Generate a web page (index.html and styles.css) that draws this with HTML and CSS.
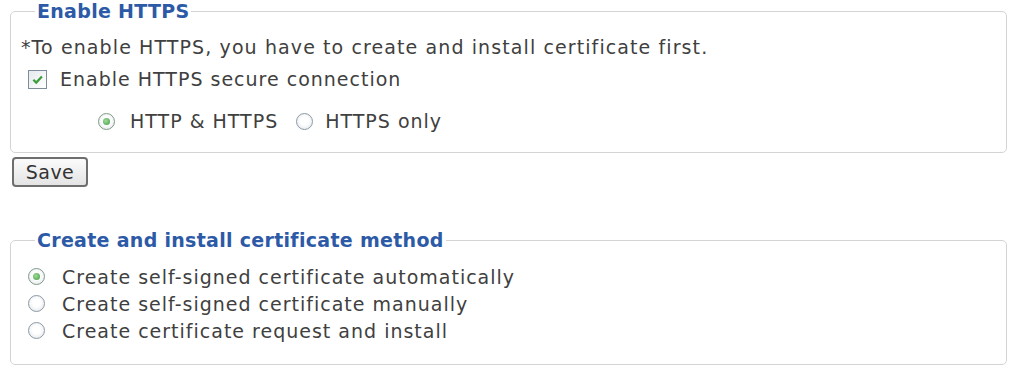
FILE: index.html
```html
<!DOCTYPE html>
<html>
<head>
<meta charset="utf-8">
<link rel="stylesheet" href="styles.css">
</head>
<body>
<div class="page">
  <fieldset class="box box-https">
    <legend class="legend">Enable HTTPS</legend>
    <p class="note">*To enable HTTPS, you have to create and install certificate first.</p>
    <div class="row row-check">
      <span class="check"><svg width="13" height="13" viewBox="0 0 10 10"><path d="M1.8 5.2 L4 7.4 L8.4 2.6" fill="none" stroke="#3c9c3c" stroke-width="1.7"/></svg></span>
      <span class="label">Enable HTTPS secure connection</span>
    </div>
    <div class="row row-mode">
      <span class="radio on"></span><span class="label">HTTP &amp; HTTPS</span>
      <span class="radio gap"></span><span class="label">HTTPS only</span>
    </div>
  </fieldset>
  <button class="save">Save</button>
  <fieldset class="box box-cert">
    <legend class="legend">Create and install certificate method</legend>
    <div class="row row-opt"><span class="radio on"></span><span class="label">Create self-signed certificate automatically</span></div>
    <div class="row row-opt"><span class="radio"></span><span class="label">Create self-signed certificate manually</span></div>
    <div class="row row-opt"><span class="radio"></span><span class="label">Create certificate request and install</span></div>
  </fieldset>
</div>
</body>
</html>
```

FILE: styles.css
```css
html, body {
  margin: 0;
  padding: 0;
  background: #ffffff;
}
body {
  font-family: "DejaVu Sans", sans-serif;
  font-size: 19px;
  letter-spacing: 1px;
  color: #404040;
}
.page {
  padding: 0 2px 0 10px;
}
.box {
  margin: 0;
  border: 1px solid #d4d4d4;
  border-radius: 5px;
  padding: 0 0 0 10px;
  min-width: 0;
}
.box-https {
  padding-top: 11px;
  padding-bottom: 18px;
}
.box-cert {
  margin-top: 42px;
  padding-top: 11px;
  padding-bottom: 20px;
}
.legend {
  color: #2d5aa6;
  font-weight: bold;
  padding: 0 2px;
  margin-left: 14px;
  line-height: 23px;
  letter-spacing: 0.3px;
}
.note {
  margin: 0;
  line-height: 26px;
  letter-spacing: 1.1px;
}
.row {
  display: flex;
  align-items: center;
}
.row-check {
  margin-top: 6px;
  height: 26px;
  padding-left: 7px;
}
.row-mode {
  margin-top: 16px;
  height: 26px;
  padding-left: 77px;
}
.row-opt {
  height: 27px;
  padding-left: 7px;
}
.check {
  width: 17px;
  height: 17px;
  border: 1px solid #7d8d9b;
  background: linear-gradient(135deg, #e6eaee, #ffffff);
  display: flex;
  align-items: center;
  justify-content: center;
  margin-right: 13px;
  flex: none;
}
.radio {
  width: 15px;
  height: 15px;
  border: 1px solid #8d99a4;
  border-radius: 50%;
  background: radial-gradient(circle at 50% 45%, #ffffff 35%, #dde2e7 100%);
  margin-right: 15px;
  position: relative;
  flex: none;
}
.row-opt .radio {
  margin-right: 17px;
}
.radio.on {
  border-color: #7f9a86;
}
.radio.on::after {
  content: "";
  position: absolute;
  left: 4px;
  top: 4px;
  width: 7px;
  height: 7px;
  border-radius: 50%;
  background: radial-gradient(circle at 40% 40%, #9fdc98, #3f9a43);
}
.radio.gap {
  margin-left: 18px;
  margin-right: 12px;
}
.save {
  display: block;
  margin: 4px 0 0 2px;
  font-family: "DejaVu Sans", sans-serif;
  font-size: 19px;
  letter-spacing: 0.5px;
  color: #333;
  background: linear-gradient(#fbfbfb, #e4e4e4);
  border: 2px solid #6e6e6e;
  border-radius: 4px;
  padding: 0;
  height: 30px;
  width: 76px;
}
```
